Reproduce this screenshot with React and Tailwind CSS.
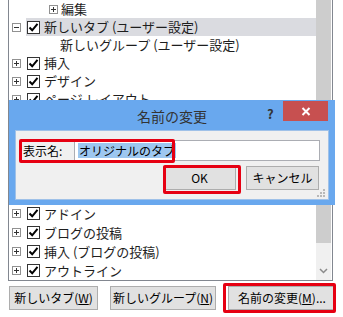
const font = { fontFamily: '"Noto Sans CJK JP", "Noto Sans", sans-serif' };

function Expander({ open }) {
  return (
    <span className="relative w-[9px] h-[9px] border border-[#919191] bg-white shrink-0">
      <span className="absolute left-[1px] top-[3px] w-[5px] h-[1px] bg-[#333]" />
      {!open && <span className="absolute left-[3px] top-[1px] w-[1px] h-[5px] bg-[#333]" />}
    </span>
  );
}

function Check() {
  return (
    <span className="w-[13px] h-[13px] border border-[#333] bg-white shrink-0 flex items-center justify-center">
      <svg width="11" height="11" viewBox="0 0 11 11">
        <path d="M1.5 5.5 L4.2 8.3 L9.5 1.8" fill="none" stroke="#000" strokeWidth="2" />
      </svg>
    </span>
  );
}

function TabRow({ label, open, selected, h = "h-[18px]" }) {
  return (
    <div className={`flex items-center ${h}`}>
      <span className="w-[3px] shrink-0" />
      <Expander open={open} />
      <div className={`flex items-center flex-1 h-full ml-[5px] pl-[1px] ${selected ? "bg-[#dadbe0]" : ""}`}>
        <Check />
        <span className="ml-[4px] whitespace-nowrap">{label}</span>
      </div>
    </div>
  );
}

function Button({ children, className = "" }) {
  return (
    <div className={`h-[24px] bg-[#e1e1e1] border border-[#adadad] flex items-center justify-center whitespace-nowrap text-[12px] text-black ${className}`}>
      {children}
    </div>
  );
}

export default function App() {
  return (
    <div className="relative w-[343px] h-[317px] bg-white overflow-hidden text-[13px] text-[#1e1e1e]" style={font}>
      <div className="ml-[8px] w-[325px] h-[281px] border border-t-0 border-[#828790] flex">
        <div className="flex-1 flex flex-col overflow-hidden">
          <div className="flex items-center h-[18px]">
            <span className="w-[40px] shrink-0" />
            <Expander />
            <span className="ml-[3px]">編集</span>
          </div>
          <TabRow label="新しいタブ (ユーザー設定)" open selected />
          <div className="flex items-center h-[18px] pl-[51px] whitespace-nowrap">新しいグループ (ユーザー設定)</div>
          <TabRow label="挿入" />
          <TabRow label="デザイン" />
          <TabRow label="ページ レイアウト" />
          {/* rows hidden behind the dialog */}
          <div className="flex-1" />
          <TabRow label="アドイン" h="h-[19px]" />
          <TabRow label="ブログの投稿" h="h-[19px]" />
          <TabRow label="挿入 (ブログの投稿)" h="h-[19px]" />
          <TabRow label="アウトライン" h="h-[19px]" />
        </div>
        <div className="w-[15px] flex flex-col">
          <div className="h-[243px] bg-[#cdcdcd]" />
          <div className="flex-1 bg-[#f0f0f0] flex items-end justify-center pb-[6px]">
            <svg width="9" height="6" viewBox="0 0 9 6">
              <path d="M1 1 L4.5 4.5 L8 1" fill="none" stroke="#8a8a8a" strokeWidth="1.5" />
            </svg>
          </div>
        </div>
        <div className="w-[1px]" />
      </div>

      <div className="flex ml-[9px] mt-[5px] gap-[12px]">
        <Button className="w-[89px]">
          新しいタブ(<span className="underline">W</span>)
        </Button>
        <Button className="w-[106px]">
          新しいグループ(<span className="underline">N</span>)
        </Button>
        <Button className="w-[108px]">
          名前の変更(<span className="underline">M</span>)...
        </Button>
      </div>
      <div className="absolute left-[223px] top-[283px] w-[113px] h-[30px] border-[3px] border-[#e60012] rounded-[2px]" />

      <div className="absolute left-[9px] top-[100px] w-[326px] h-[105px] bg-[#69a8ee] flex flex-col">
        <div className="relative h-[30px] flex items-center justify-center">
          <span className="text-[14px] text-[#333] mt-[2px]">名前の変更</span>
          <span className="absolute left-[258px] top-[4px] text-[13px] font-bold text-[#333]">?</span>
          <div className="absolute left-[274px] top-[1px] w-[45px] h-[20px] bg-[#c75050] flex items-center justify-center">
            <svg width="10" height="9" viewBox="0 0 10 9">
              <path d="M1.5 1 L8.5 8 M8.5 1 L1.5 8" stroke="#fff" strokeWidth="2" />
            </svg>
          </div>
        </div>
        <div className="relative ml-[6px] w-[314px] h-[70px] bg-[#f0f0f0] border border-[#9fc1e8]">
          <div className="flex items-center mt-[9px] h-[21px]">
            <span className="ml-[7px] w-[51px] text-[12px] text-black whitespace-nowrap">表示名:</span>
            <div className="w-[246px] h-[21px] bg-white border border-[#abadb3] flex items-center pl-[3px]">
              <span className="bg-[#9dc7f0] text-black text-[12px] leading-[15px] px-[1px]">オリジナルのタブ</span>
            </div>
          </div>
          <div className="flex justify-end gap-[10px] mr-[9px] mt-[5px]">
            <Button className="w-[73px]">OK</Button>
            <Button className="w-[73px]">キャンセル</Button>
          </div>
          <div className="absolute right-[3px] bottom-[2px] grid grid-cols-3 gap-[1px]">
            <span className="w-[2px] h-[2px]" />
            <span className="w-[2px] h-[2px]" />
            <span className="w-[2px] h-[2px] bg-[#b8b8b8]" />
            <span className="w-[2px] h-[2px]" />
            <span className="w-[2px] h-[2px] bg-[#b8b8b8]" />
            <span className="w-[2px] h-[2px] bg-[#b8b8b8]" />
            <span className="w-[2px] h-[2px] bg-[#b8b8b8]" />
            <span className="w-[2px] h-[2px] bg-[#b8b8b8]" />
            <span className="w-[2px] h-[2px] bg-[#b8b8b8]" />
          </div>
          <div className="absolute left-[3px] top-[8px] w-[156px] h-[24px] border-[3px] border-[#e60012] rounded-[2px]" />
          <div className="absolute left-[147px] top-[34px] w-[78px] h-[29px] border-[3px] border-[#e60012] rounded-[2px]" />
        </div>
      </div>
    </div>
  );
}
